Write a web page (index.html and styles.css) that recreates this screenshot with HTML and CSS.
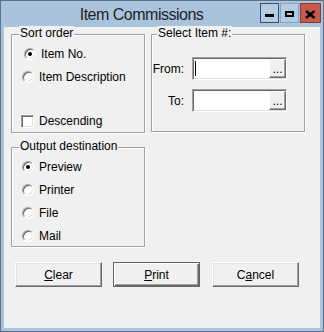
FILE: index.html
```html
<!DOCTYPE html>
<html lang="en">
<head>
  <meta charset="UTF-8">
  <title>Item Commissions</title>
  <link rel="stylesheet" href="styles.css">
</head>
<body>
  <div class="window">
    <div class="titlebar">
      <div class="title">Item Commissions</div>
      <div class="caption-buttons">
        <span class="cap-btn cap-min">
          <svg width="17" height="18" viewBox="0 0 17 18"><rect x="4" y="10" width="9" height="3" fill="#000"/></svg>
        </span>
        <span class="cap-btn cap-max">
          <svg width="17" height="18" viewBox="0 0 17 18"><path d="M4 7h9v6H4z M6 9v2h5V9z" fill="#000" fill-rule="evenodd"/></svg>
        </span>
        <span class="cap-btn cap-close">
          <svg width="19" height="18" viewBox="0 0 19 18"><path d="M5 7L13.5 14M13.5 7L5 14" stroke="#000" stroke-width="2.4"/></svg>
        </span>
      </div>
    </div>

    <div class="client">
      <div class="groups">
        <div class="col-left">
          <div class="groupbox sort-group">
            <div class="group-label">Sort order</div>
            <div class="option first"><span class="radio checked"></span>Item No.</div>
            <div class="option second"><span class="radio"></span>Item Description</div>
            <div class="option descending"><span class="checkbox"></span>Descending</div>
          </div>

          <div class="groupbox output-group">
            <div class="group-label">Output destination</div>
            <div class="option"><span class="radio checked"></span>Preview</div>
            <div class="option"><span class="radio"></span>Printer</div>
            <div class="option"><span class="radio"></span>File</div>
            <div class="option"><span class="radio"></span>Mail</div>
          </div>
        </div>

        <div class="groupbox select-group">
          <div class="group-label">Select Item #:</div>
          <div class="range">
            <span class="range-label">From:</span>
            <div class="lookup">
              <span class="caret"></span>
              <span class="lookup-btn">...</span>
            </div>
            <span class="range-label">To:</span>
            <div class="lookup">
              <span class="lookup-btn">...</span>
            </div>
          </div>
        </div>
      </div>

      <div class="actions">
        <button class="btn"><u>C</u>lear</button>
        <button class="btn btn-default"><u>P</u>rint</button>
        <button class="btn btn-cancel">C<u>a</u>ncel</button>
      </div>
    </div>
  </div>
</body>
</html>
```

FILE: styles.css
```css
* {
  box-sizing: border-box;
}

body {
  margin: 0;
  font-family: "Liberation Sans", Arial, sans-serif;
  font-size: 12px;
  color: #000;
  background: #fff;
}

.window {
  width: 324px;
  height: 332px;
  border: 1px solid #5e7086;
  background: #aac3dd;
  padding: 0 3px 3px;
  display: flex;
  flex-direction: column;
}

/* title bar */
.titlebar {
  height: 26px;
  display: flex;
  align-items: flex-start;
  flex-shrink: 0;
}

.title {
  flex: 1;
  text-align: center;
  padding: 2px 0 0 19px;
  font-size: 16px;
  letter-spacing: -0.5px;
  line-height: 24px;
  color: #1e1e1e;
}

.caption-buttons {
  display: flex;
  gap: 1px;
  margin-top: 2px;
  margin-right: -1px;
}

.cap-btn {
  width: 19px;
  height: 20px;
  display: flex;
  border: 1px solid #8aa1bb;
  background: #b4cbe4;
}

.cap-min {
  border-color: #3e4d60;
}

.cap-close {
  width: 21px;
  background: #c8594b;
  border-color: #8c3a30;
}

/* client area */
.client {
  flex: 1;
  background: #f0f0f0;
  padding: 7px 0 0 7px;
}

.groups {
  display: flex;
  gap: 6px;
  align-items: flex-start;
}

.col-left {
  display: flex;
  flex-direction: column;
  gap: 14px;
  width: 134px;
}

.groupbox {
  border: 1px solid #a0a0a0;
  box-shadow: inset 1px 1px 0 #fff, 1px 1px 0 #fff;
}

.group-label {
  width: fit-content;
  margin: -9px 0 0 7px;
  padding: 0 1px;
  line-height: 14px;
  background: #f0f0f0;
}

.sort-group {
  height: 99px;
}

.output-group {
  height: 100px;
}

.select-group {
  width: 154px;
  height: 98px;
}

.select-group .group-label {
  margin-left: 5px;
}

/* radios and checkboxes */
.option {
  height: 23px;
  display: flex;
  align-items: center;
  gap: 5px;
  padding-left: 10px;
}

.sort-group .first {
  margin-top: 2px;
  padding-left: 12px;
}

.sort-group .descending {
  height: 22px;
  margin-top: 22px;
  padding-left: 9px;
}

.output-group .group-label {
  margin-bottom: 2px;
}

.radio {
  width: 12px;
  height: 12px;
  border-radius: 50%;
  border: 1px solid;
  border-color: #a0a0a0 #fff #fff #a0a0a0;
  box-shadow: inset 1px 1px 0 #696969, inset -1px -1px 0 #e3e3e3;
  background: #fff;
  display: flex;
  align-items: center;
  justify-content: center;
}

.radio.checked::after {
  content: "";
  width: 4px;
  height: 4px;
  border-radius: 50%;
  background: #000;
}

.checkbox {
  width: 13px;
  height: 13px;
  border: 1px solid;
  border-color: #a0a0a0 #fff #fff #a0a0a0;
  box-shadow: inset 1px 1px 0 #696969, inset -1px -1px 0 #e3e3e3;
  background: #fff;
}

/* item range */
.range {
  display: grid;
  grid-template-columns: 32px 95px;
  column-gap: 8px;
  row-gap: 9px;
  align-items: center;
  margin-top: 17px;
}

.range-label {
  text-align: right;
}

.lookup {
  height: 23px;
  display: flex;
  align-items: center;
  padding: 1px 0 1px 1px;
  background: #fff;
  border: 1px solid;
  border-color: #a0a0a0 #fff #fff #a0a0a0;
  box-shadow: inset 1px 1px 0 #696969, inset -1px -1px 0 #e3e3e3;
}

.caret {
  width: 1px;
  height: 15px;
  margin-left: 1px;
  background: #000;
}

.lookup-btn {
  margin-left: auto;
  width: 17px;
  height: 100%;
  display: flex;
  align-items: flex-end;
  justify-content: center;
  padding-bottom: 2px;
  font-size: 12px;
  line-height: 12px;
  background: #f0f0f0;
  border: 1px solid;
  border-color: #fff #696969 #696969 #fff;
  box-shadow: inset -1px -1px 0 #a0a0a0;
}

/* buttons */
.actions {
  display: flex;
  gap: 11px;
  margin: 15px 0 0 4px;
}

.btn {
  width: 87px;
  height: 25px;
  padding: 0;
  font: inherit;
  color: #000;
  background: #f0f0f0;
  border: 1px solid;
  border-color: #fff #696969 #696969 #fff;
  box-shadow: inset -1px -1px 0 #a0a0a0, inset 1px 1px 0 #e3e3e3;
}

.btn-default {
  border: 1px solid #646464;
  box-shadow: inset 1px 1px 0 #fff, inset -1px -1px 0 #696969, inset -2px -2px 0 #a0a0a0;
}

.btn-cancel {
  margin-left: 1px;
}
```
